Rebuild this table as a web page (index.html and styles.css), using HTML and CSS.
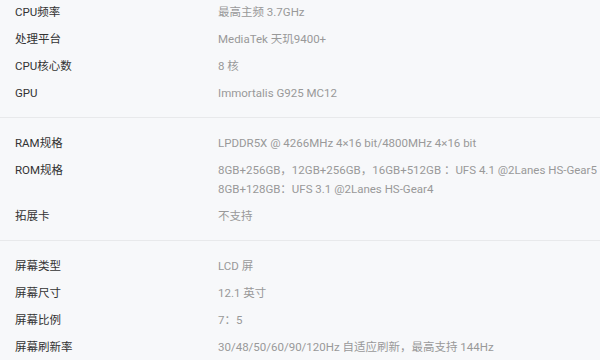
FILE: index.html
```html
<!DOCTYPE html>
<html lang="zh-CN">
<head>
<meta charset="utf-8">
<link rel="stylesheet" href="styles.css">
</head>
<body>
<div class="specs">
  <section class="group first">
    <div class="row"><div class="label">CPU频率</div><div class="value">最高主频 3.7GHz</div></div>
    <div class="row"><div class="label">处理平台</div><div class="value">MediaTek 天玑9400+</div></div>
    <div class="row"><div class="label">CPU核心数</div><div class="value">8 核</div></div>
    <div class="row"><div class="label">GPU</div><div class="value">Immortalis G925 MC12</div></div>
  </section>
  <section class="group">
    <div class="row"><div class="label">RAM规格</div><div class="value">LPDDR5X @ 4266MHz 4×16 bit/4800MHz 4×16 bit</div></div>
    <div class="row"><div class="label">ROM规格</div><div class="value">8GB+256GB，12GB+256GB，16GB+512GB ：UFS 4.1 @2Lanes HS-Gear5<br>8GB+128GB：UFS 3.1 @2Lanes HS-Gear4</div></div>
    <div class="row"><div class="label">拓展卡</div><div class="value">不支持</div></div>
  </section>
  <section class="group">
    <div class="row"><div class="label">屏幕类型</div><div class="value">LCD 屏</div></div>
    <div class="row"><div class="label">屏幕尺寸</div><div class="value">12.1 英寸</div></div>
    <div class="row"><div class="label">屏幕比例</div><div class="value">7：5</div></div>
    <div class="row"><div class="label">屏幕刷新率</div><div class="value">30/48/50/60/90/120Hz 自适应刷新，最高支持 144Hz</div></div>
  </section>
</div>
</body>
</html>
```
FILE: styles.css
```css
html, body {
  margin: 0;
  padding: 0;
  background: #f7f8fa;
}
body {
  font-family: "Roboto", "Noto Sans CJK SC", sans-serif;
  font-size: 11.5px;
  overflow: hidden;
  width: 600px;
  height: 360px;
}
.specs {
  display: flex;
  flex-direction: column;
}
.group {
  display: flex;
  flex-direction: column;
  gap: 8px;
  padding: 16px 0 14px;
  border-bottom: 1px solid #e8e9eb;
}
.group.first {
  padding-top: 3px;
}
.row {
  display: grid;
  grid-template-columns: 203px 1fr;
  padding-left: 15px;
  line-height: 19px;
}
.label {
  color: #333;
}
.value {
  color: #999;
  white-space: nowrap;
}
```
